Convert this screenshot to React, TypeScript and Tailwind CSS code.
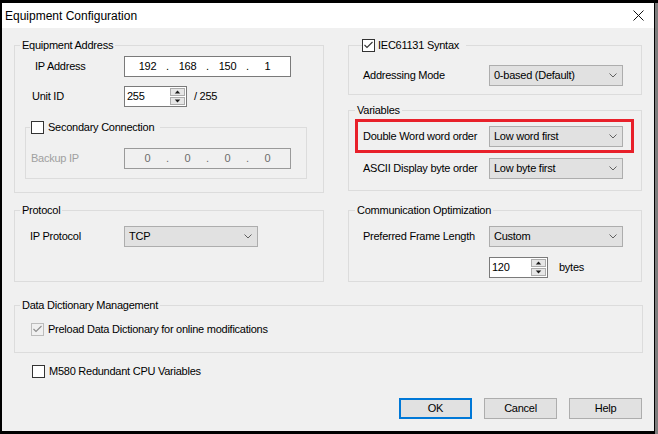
import React from "react";

const ff = "font-['Liberation_Sans',Arial,sans-serif]";

function Chevron() {
  return (
    <svg width="8" height="5" viewBox="0 0 8 5" className="shrink-0">
      <path d="M0.5 0.5 L4 4 L7.5 0.5" fill="none" stroke="#606060" strokeWidth="1" />
    </svg>
  );
}

function Combo({ value }: { value: string }) {
  return (
    <div className="flex h-[21px] w-[134px] shrink-0 items-center justify-between border border-[#adadad] bg-[#e1e1e1] pl-[4px] pr-[5px]">
      <span>{value}</span>
      <Chevron />
    </div>
  );
}

function IpBox({ parts, disabled = false }: { parts: string[]; disabled?: boolean }) {
  return (
    <div
      className={`flex h-[21px] w-[167px] shrink-0 items-center border pl-[6px] ${
        disabled ? "border-[#9a9a9a] bg-[#f0f0f0] text-[#6d6d6d]" : "border-[#7a7a7a] bg-white text-black"
      }`}
    >
      {parts.map((p, i) => (
        <React.Fragment key={i}>
          {i > 0 && <span className="w-[7px] text-center">.</span>}
          <span className="w-[33px] text-center">{p}</span>
        </React.Fragment>
      ))}
    </div>
  );
}

function Arrow({ up }: { up: boolean }) {
  return (
    <svg width="7" height="4" viewBox="0 0 7 4">
      <path d={up ? "M3.5 0 L7 4 L0 4 Z" : "M0 0 L7 0 L3.5 4 Z"} fill="#1a1a1a" transform="scale(0.78) translate(1 0.5)" />
    </svg>
  );
}

function Spin({ value, width }: { value: string; width: string }) {
  return (
    <div className={`flex h-[21px] shrink-0 border border-[#7a7a7a] bg-white ${width}`}>
      <div className="flex flex-1 items-center pl-[2px]">{value}</div>
      <div className="flex w-[16px] flex-col gap-[1px] py-[1px] pr-[1px]">
        <div className="flex flex-1 items-center justify-center border border-[#acacac] bg-[#e6e6e6]">
          <Arrow up />
        </div>
        <div className="flex flex-1 items-center justify-center border border-[#acacac] bg-[#e6e6e6]">
          <Arrow up={false} />
        </div>
      </div>
    </div>
  );
}

function Check({ checked = false, disabled = false }: { checked?: boolean; disabled?: boolean }) {
  return (
    <span
      className={`flex h-[13px] w-[13px] shrink-0 items-center justify-center border ${
        disabled ? "border-[#bcbcbc] bg-[#f0f0f0]" : "border-[#333333] bg-white"
      }`}
    >
      {checked && (
        <svg width="11" height="11" viewBox="0 0 11 11">
          <path d="M1.5 5 L4 7.5 L9.5 2" fill="none" stroke={disabled ? "#8c8c8c" : "#333333"} strokeWidth="1.1" />
        </svg>
      )}
    </span>
  );
}

function Button({ label, primary = false }: { label: string; primary?: boolean }) {
  return (
    <div
      className={`flex h-[21px] w-[73px] items-center justify-center bg-[#e1e1e1] ${
        primary ? "border-2 border-[#0078d7]" : "border border-[#adadad]"
      }`}
    >
      {label}
    </div>
  );
}

export default function App() {
  return (
    <div className={`flex h-[434px] w-[658px] overflow-hidden bg-black ${ff}`}>
      <div className="ml-[2px] mt-[3px] flex h-[428px] w-[653px] flex-col bg-[#f0f0f0] text-[11px] tracking-[-0.25px] text-black">
        {/* title bar */}
        <div className="flex h-[25px] shrink-0 items-center justify-between bg-white pl-[3px] pr-[8px]">
          <span className="text-[12px] tracking-normal">Equipment Configuration</span>
          <svg width="11" height="11" viewBox="0 0 11 11" className="mr-[2px]">
            <path d="M0.5 0.5 L10.5 10.5 M10.5 0.5 L0.5 10.5" stroke="#111" strokeWidth="1" />
          </svg>
        </div>

        {/* body */}
        <div className="flex flex-1 flex-col pl-[12px]">
          <div className="flex items-start gap-[24px]">
            {/* left column */}
            <div className="flex w-[310px] flex-col">
              <fieldset className="mt-[11px] border border-[#dcdcdc] pb-[13px]">
                <legend className="ml-[5px] px-[2px] leading-[13px]">Equipment Address</legend>
                <div className="mt-[4px] flex items-center pl-[20px]">
                  <span className="w-[89px]">IP Address</span>
                  <IpBox parts={["192", "168", "150", "1"]} />
                </div>
                <div className="mt-[9px] flex items-center pl-[17px]">
                  <span className="w-[92px]">Unit ID</span>
                  <Spin value="255" width="w-[63px]" />
                  <span className="ml-[7px]">/ 255</span>
                </div>
                <fieldset className="ml-[10px] mt-[14px] w-[282px] border border-[#dcdcdc] pb-[9px]">
                  <legend className="ml-[4px] pl-[1px] pr-[6px]">
                    <span className="flex h-[13px] items-center gap-[4px]">
                      <Check />
                      <span>Secondary Connection</span>
                    </span>
                  </legend>
                  <div className="mt-[14px] flex items-center pl-[5px]">
                    <span className="w-[93px] text-[#a0a0a0]">Backup IP</span>
                    <IpBox parts={["0", "0", "0", "0"]} disabled />
                  </div>
                </fieldset>
              </fieldset>

              <fieldset className="mt-[11px] border border-[#dcdcdc] pb-[34px]">
                <legend className="ml-[5px] px-[2px] leading-[13px]">Protocol</legend>
                <div className="mt-[9px] flex items-center pl-[15px]">
                  <span className="w-[94px]">IP Protocol</span>
                  <Combo value="TCP" />
                </div>
              </fieldset>
            </div>

            {/* right column */}
            <div className="flex w-[294px] flex-col">
              <fieldset className="mt-[11px] border border-[#dcdcdc] pb-[8px]">
                <legend className="ml-[13px] pr-[7px]">
                  <span className="flex h-[13px] items-center gap-[3px]">
                    <Check checked />
                    <span>IEC61131 Syntax</span>
                  </span>
                </legend>
                <div className="mt-[13px] flex items-center pl-[14px]">
                  <span className="w-[126px]">Addressing Mode</span>
                  <Combo value="0-based (Default)" />
                </div>
              </fieldset>

              <fieldset className="mt-[9px] border border-[#dcdcdc] pb-[11px]">
                <legend className="ml-[6px] px-[2px] leading-[13px]">Variables</legend>
                <div className="ml-[6px] mr-[7px] mt-[2px] flex items-center border-[3px] border-[#e8202a] pb-[3px] pl-[5px] pt-[4px]">
                  <span className="w-[126px]">Double Word word order</span>
                  <Combo value="Low word first" />
                </div>
                <div className="mt-[5px] flex items-center pl-[14px]">
                  <span className="w-[126px]">ASCII Display byte order</span>
                  <Combo value="Low byte first" />
                </div>
              </fieldset>

              <fieldset className="mt-[13px] border border-[#dcdcdc] pb-[4px]">
                <legend className="ml-[6px] px-[2px] leading-[13px]">Communication Optimization</legend>
                <div className="mt-[9px] flex items-center pl-[14px]">
                  <span className="w-[126px]">Preferred Frame Length</span>
                  <Combo value="Custom" />
                </div>
                <div className="mt-[10px] flex h-[20px] items-center pl-[140px]">
                  <Spin value="120" width="w-[59px] h-[20px]" />
                  <span className="ml-[11px]">bytes</span>
                </div>
              </fieldset>
            </div>
          </div>

          <fieldset className="mt-[17px] w-[629px] border border-[#dcdcdc] pb-[16px]">
            <legend className="ml-[5px] px-[2px] leading-[13px]">Data Dictionary Management</legend>
            <div className="mt-[11px] flex h-[13px] items-center gap-[4px] pl-[16px]">
              <Check checked disabled />
              <span>Preload Data Dictionary for online modifications</span>
            </div>
          </fieldset>

          <div className="ml-[18px] mt-[12px] flex h-[13px] items-center gap-[4px]">
            <Check />
            <span>M580 Redundant CPU Variables</span>
          </div>

          <div className="mr-[12px] mt-[20px] flex justify-end gap-[12px]">
            <Button label="OK" primary />
            <Button label="Cancel" />
            <Button label="Help" />
          </div>
        </div>
      </div>
      <div className="ml-[1px] mt-[3px] w-[3px] bg-[#7d7d7d]" />
    </div>
  );
}
